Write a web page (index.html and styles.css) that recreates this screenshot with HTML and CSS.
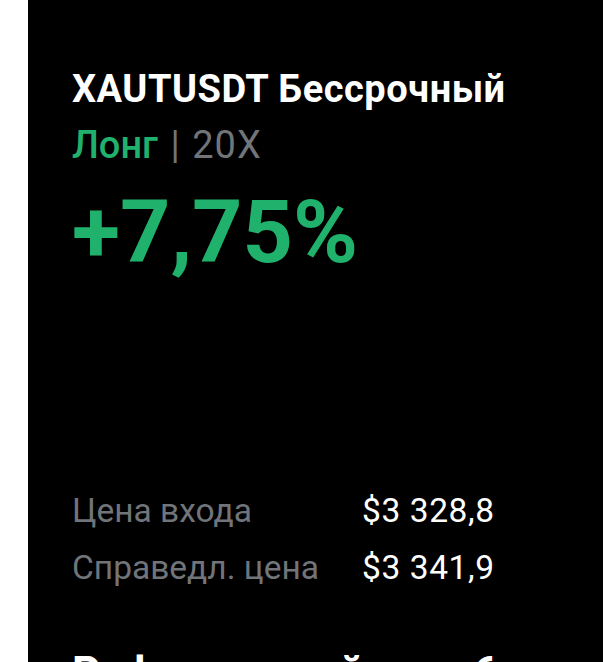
FILE: index.html
```html
<!DOCTYPE html>
<html lang="ru">
<head>
    <meta charset="UTF-8">
    <title>XAUTUSDT Бессрочный</title>
    <link rel="stylesheet" href="styles.css">
</head>
<body>
    <div class="card">
        <h2 class="symbol">XAUTUSDT Бессрочный</h2>
        <div class="side"><span class="long">Лонг</span> <span class="sep">|</span> <span class="lev">20X</span></div>
        <div class="pnl">+7,75%</div>
        <div class="prices">
            <span class="label">Цена входа</span><span class="value">$3 328,8</span>
            <span class="label">Справедл. цена</span><span class="value">$3 341,9</span>
        </div>
        <h2 class="ref">Реферальный код: 6</h2>
    </div>
</body>
</html>
```
FILE: styles.css
```css
html, body { margin: 0; padding: 0; background: #fff; height: 662px; overflow: hidden; }
body { font-family: Roboto, "Noto Sans", Arial, sans-serif; }
.card { margin-left: 28px; background: #000; height: 662px; padding: 66px 44px 0; box-sizing: border-box; overflow: hidden; color: #fff; }
.symbol { margin: 0; font-size: 38px; line-height: 46px; font-weight: 700; letter-spacing: 0.5px; }
.side { margin-top: 10px; font-size: 38px; line-height: 46px; color: #71757a; }
.long { color: #20b26c; font-weight: 500; }
.sep { margin: 0 3px; }
.lev { letter-spacing: 1px; }
.pnl { margin-top: 14px; font-size: 88px; line-height: 100px; font-weight: 700; color: #20b26c; }
.prices { margin-top: 200px; display: grid; grid-template-columns: 290px auto; font-size: 33.5px; line-height: 57px; }
.label { color: #71757a; }
.value { color: #fff; letter-spacing: 0.6px; }
.ref { margin: 52px 0 0; font-size: 44px; line-height: 50px; font-weight: 700; white-space: nowrap; }
```
